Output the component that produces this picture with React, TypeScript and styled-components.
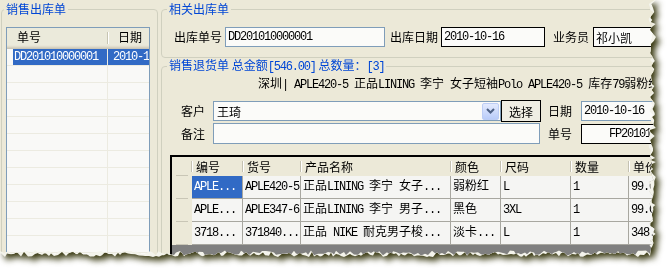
import styled, { createGlobalStyle } from 'styled-components';

const MONO = `"Liberation Mono", "Noto Sans CJK SC", monospace`;

const GlobalStyle = createGlobalStyle`
  html, body {
    margin: 0;
    padding: 0;
    background: #ffffff;
  }
  body {
    font-family: "Noto Sans CJK SC", "Noto Sans", sans-serif;
    font-size: 12px;
    color: #000;
  }
`;

// torn paper edge on the right and bottom
const makeTorn = (W: number, H: number, spread: number, seed: number) => {
    let s = seed;
    const rnd = () => {
        s = (s * 16807) % 2147483647;
        return s / 2147483647;
    };
    const pts: string[] = ['0px 0px'];
    for (let y = 0; y <= H - 6; y += 2 + Math.floor(rnd() * 3)) {
        pts.push(`${(W - spread - rnd() * 6).toFixed(1)}px ${y}px`);
    }
    for (let x = W - 6; x >= 0; x -= 2 + Math.floor(rnd() * 3)) {
        pts.push(`${x}px ${(H - spread - rnd() * 5).toFixed(1)}px`);
    }
    pts.push(`0px ${H - spread - 3}px`);
    return `polygon(${pts.join(', ')})`;
};

const edgeClip = makeTorn(656, 257, 0, 91);
const paperClip = makeTorn(656, 257, 1.5, 37);

// latin text in the old bitmap font is half width, han characters full width
const Han = styled.span`
    letter-spacing: 0;
`;
const mixed = (text: string) =>
    text.split(/([\u3000-\u9fff\uff00-\uffef]+)/).map((part, i) =>
        /[\u3000-\u9fff\uff00-\uffef]/.test(part) ? <Han key={i}>{part}</Han> : part
    );

const Screen = styled.div`
    width: 671px;
    height: 270px;
    overflow: hidden;
    filter: drop-shadow(4px 4px 3px rgba(46, 46, 4, 0.95));
`;

const Edge = styled.div<{ $clip: string }>`
    width: 660px;
    height: 262px;
    background: #f4f4ec;
    clip-path: ${(p) => p.$clip};
`;

const Paper = styled.div<{ $clip: string }>`
    width: 660px;
    height: 262px;
    box-sizing: border-box;
    padding-top: 2px;
    display: flex;
    align-items: flex-start;
    overflow: hidden;
    background: #ece9d8;
    clip-path: ${(p) => p.$clip};
`;

const GroupBox = styled.fieldset`
    margin: 0;
    padding: 0;
    min-width: 0;
    box-sizing: border-box;
    border: 1px solid #d0d0bf;
    border-radius: 4px;
`;

const GroupTitle = styled.legend<{ $indent: number }>`
    margin-left: ${(p) => p.$indent}px;
    padding: 0 2px;
    color: #0046d5;
    font-size: 12px;
    line-height: 14px;
    white-space: nowrap;
`;

const TitleNum = styled.span`
    font-family: ${MONO};
    letter-spacing: -1.2px;
`;

const LeftGroup = styled(GroupBox)`
    flex: none;
    width: 157px;
    height: 280px;
    margin-left: 1px;
    padding: 11px 0 0 4px;
`;

const ListView = styled.div`
    width: 144px;
    height: 240px;
    box-sizing: border-box;
    border: 1px solid #7f9db9;
    background: #f9f9f7;
`;

const ListHead = styled.div`
    display: flex;
    height: 21px;
    box-sizing: border-box;
    padding-bottom: 4px;
    background: #ebeadb;
    box-shadow: inset 0 -1px #cbc7b8, inset 0 -2px #d6d2c2, inset 0 -3px #e2decd, inset 0 -4px #e8e6d8;
`;

const HeadCell = styled.div<{ $w?: number }>`
    position: relative;
    width: ${(p) => (p.$w ? `${p.$w}px` : 'auto')};
    flex: ${(p) => (p.$w ? 'none' : '1')};
    padding-left: 10px;
    box-sizing: border-box;
    line-height: 17px;
    &::after {
        content: ${(p) => (p.$w ? '""' : 'none')};
        position: absolute;
        right: 0;
        top: 4px;
        width: 1px;
        height: 12px;
        background: #c7c5b2;
        box-shadow: 1px 0 #ffffff;
    }
`;

const ListRow = styled.div`
    display: flex;
    height: 17px;
    box-sizing: border-box;
    padding-left: 6px;
    border-bottom: 1px solid #ecebe1;
`;

const ListCell = styled.div<{ $w?: number; $selected?: boolean; $pad: number }>`
    width: ${(p) => (p.$w ? `${p.$w}px` : 'auto')};
    flex: ${(p) => (p.$w ? 'none' : '1')};
    padding-left: ${(p) => p.$pad}px;
    box-sizing: border-box;
    border-right: ${(p) => (p.$w ? '1px solid #ecebe1' : 'none')};
    background: ${(p) => (p.$selected ? '#316ac5' : 'transparent')};
    color: ${(p) => (p.$selected ? '#ffffff' : '#000')};
    font-family: ${MONO};
    letter-spacing: -1.2px;
    line-height: 16px;
    white-space: nowrap;
    overflow: hidden;
`;

const RightPane = styled.div`
    flex: none;
    display: flex;
    flex-direction: column;
    width: 520px;
    margin-left: 3px;
`;

const TopGroup = styled(GroupBox)`
    padding: 11px 0 10px 12px;
`;

const FieldRow = styled.div`
    display: flex;
    align-items: center;
`;

const Label = styled.span<{ $gap?: number }>`
    margin-left: ${(p) => p.$gap || 0}px;
    line-height: 14px;
    white-space: nowrap;
`;

const TextBox = styled.input<{ $w: number; $gap?: number; $dark?: boolean; $h?: number; $indent?: number }>`
    box-sizing: border-box;
    width: ${(p) => p.$w}px;
    height: ${(p) => p.$h || 20}px;
    margin: 0 0 0 ${(p) => p.$gap || 0}px;
    padding: 0 0 0 ${(p) => p.$indent || 2}px;
    border: 1px solid ${(p) => (p.$dark ? '#000000' : '#7f9db9')};
    border-radius: 0;
    background: #fbfbf9;
    color: #000;
    font-family: ${MONO};
    font-size: 12px;
    letter-spacing: -1.2px;
    outline: none;
    flex: none;
`;

const HanBox = styled(TextBox)`
    font-family: "Noto Sans CJK SC", sans-serif;
    letter-spacing: 0;
`;

const BottomGroup = styled(GroupBox)`
    padding: 1px 0 0 8px;
    height: 210px;
`;

const Desc = styled.div`
    margin: 2px 0 0 88px;
    line-height: 16px;
    white-space: nowrap;
    font-family: ${MONO};
    letter-spacing: -1.2px;
`;

const FormRow = styled.div<{ $top: number }>`
    display: flex;
    align-items: center;
    margin: ${(p) => p.$top}px 0 0 11px;
`;

const FormLabel = styled.span<{ $w: number; $gap?: number }>`
    width: ${(p) => p.$w}px;
    margin-left: ${(p) => p.$gap || 0}px;
    flex: none;
    line-height: 14px;
`;

const Combo = styled.div`
    box-sizing: border-box;
    width: 288px;
    height: 20px;
    display: flex;
    align-items: center;
    justify-content: space-between;
    padding: 0 1px 0 3px;
    border: 1px solid #7f9db9;
    background: #fbfbf9;
    flex: none;
`;

const ComboArrow = styled.span`
    box-sizing: border-box;
    width: 17px;
    height: 17px;
    display: flex;
    align-items: center;
    justify-content: center;
    border: 1px solid #bccdf5;
    border-radius: 2px;
    background: linear-gradient(#e3eafe, #b9ccf9);
`;

const PickButton = styled.button`
    box-sizing: border-box;
    width: 40px;
    height: 22px;
    padding: 0;
    border: 1px solid #000;
    border-radius: 0;
    background: #efede3;
    color: #000;
    font: inherit;
    flex: none;
`;

const COLS = '20px 51px 58px 150px 50px 70px 58px 80px';

const DataGrid = styled.div`
    margin-top: 11px;
    width: 520px;
    height: 110px;
    box-sizing: border-box;
    border-top: 2px solid #000;
    border-left: 2px solid #000;
    background: #808080;
`;

const GridRow = styled.div<{ $header?: boolean }>`
    display: grid;
    grid-template-columns: ${COLS};
    height: ${(p) => (p.$header ? 19 : 23)}px;
    background: #ece9d8;
`;

const GridHead = styled.div`
    position: relative;
    padding-left: 4px;
    line-height: 19px;
    white-space: nowrap;
    &::before {
        content: "";
        position: absolute;
        left: -1px;
        top: 4px;
        width: 1px;
        height: 11px;
        background: #c5c2b2;
        box-shadow: 1px 0 #ffffff;
    }
`;

const RowHeader = styled.div`
    position: relative;
    background: #ece9d8;
    &::after {
        content: "";
        position: absolute;
        left: 4px;
        right: 4px;
        bottom: 0;
        height: 1px;
        background: #c9c6b6;
    }
`;

const GridCell = styled.div<{ $selected?: boolean }>`
    box-sizing: border-box;
    padding-left: 2px;
    border-right: 1px solid #a8a7a0;
    border-bottom: 1px solid #a8a7a0;
    background: ${(p) => (p.$selected ? '#316ac5' : '#f5f5f3')};
    color: ${(p) => (p.$selected ? '#ffffff' : '#000')};
    font-family: ${MONO};
    letter-spacing: -1.2px;
    line-height: 22px;
    white-space: nowrap;
    overflow: hidden;
`;

const headers = ['', '编号', '货号', '产品名称', '颜色', '尺码', '数量', '单价'];
const rows = [
    ['APLE...', 'APLE420-5', '正品LINING 李宁 女子...', '弱粉红', 'L', '1', '99.00'],
    ['APLE...', 'APLE347-6', '正品LINING 李宁 男子...', '黑色', '3XL', '1', '99.00'],
    ['3718...', '371840...', '正品 NIKE 耐克男子梭...', '淡卡...', 'L', '1', '348.00'],
];

function App() {
    return (
        <>
            <GlobalStyle />
            <Screen>
                <Edge $clip={edgeClip}>
                    <Paper $clip={paperClip}>
                        <LeftGroup>
                            <GroupTitle $indent={-2}>销售出库单</GroupTitle>
                            <ListView>
                                <ListHead>
                                    <HeadCell $w={101}>单号</HeadCell>
                                    <HeadCell>日期</HeadCell>
                                </ListHead>
                                {Array.from({ length: 12 }).map((_, i) => (
                                    <ListRow key={i}>
                                        <ListCell $w={95} $pad={1} $selected={i === 0}>
                                            {i === 0 ? 'DD201010000001' : ''}
                                        </ListCell>
                                        <ListCell $pad={5} $selected={i === 0}>
                                            {i === 0 ? '2010-10-16' : ''}
                                        </ListCell>
                                    </ListRow>
                                ))}
                            </ListView>
                        </LeftGroup>

                        <RightPane>
                            <TopGroup>
                                <GroupTitle $indent={-7}>相关出库单</GroupTitle>
                                <FieldRow>
                                    <Label>出库单号</Label>
                                    <TextBox $w={160} $gap={3} readOnly value="DD201010000001" />
                                    <Label $gap={5}>出库日期</Label>
                                    <TextBox $w={104} $gap={3} $dark readOnly value="2010-10-16" />
                                    <Label $gap={8}>业务员</Label>
                                    <HanBox $w={90} $gap={4} $dark readOnly value="祁小凯" />
                                </FieldRow>
                            </TopGroup>

                            <BottomGroup>
                                <GroupTitle $indent={-3}>
                                    销售退货单 总金额<TitleNum>[546.00]</TitleNum> 总数量：<TitleNum>[3]</TitleNum>
                                </GroupTitle>
                                <Desc>{mixed('深圳| APLE420-5 正品LINING 李宁 女子短袖Polo APLE420-5 库存79弱粉红')}</Desc>
                                <FormRow $top={7}>
                                    <FormLabel $w={32}>客户</FormLabel>
                                    <Combo>
                                        <span>王琦</span>
                                        <ComboArrow>
                                            <svg width="9" height="6" viewBox="0 0 9 6">
                                                <polyline points="1,1 4.5,4.5 8,1" fill="none" stroke="#4d6185" strokeWidth="2" />
                                            </svg>
                                        </ComboArrow>
                                    </Combo>
                                    <PickButton>选择</PickButton>
                                    <FormLabel $w={33} $gap={7}>日期</FormLabel>
                                    <TextBox $w={90} readOnly value="2010-10-16" />
                                </FormRow>
                                <FormRow $top={1}>
                                    <FormLabel $w={32}>备注</FormLabel>
                                    <TextBox $w={327} $h={21} readOnly value="" />
                                    <FormLabel $w={33} $gap={8}>单号</FormLabel>
                                    <TextBox $w={90} $dark $indent={27} readOnly value="FP201010000001" />
                                </FormRow>

                                <DataGrid>
                                    <GridRow $header>
                                        {headers.map((h, i) =>
                                            i === 0 ? <RowHeader key={i} /> : <GridHead key={i}>{h}</GridHead>
                                        )}
                                    </GridRow>
                                    {rows.map((r, ri) => (
                                        <GridRow key={ri}>
                                            <RowHeader />
                                            {r.map((c, ci) => (
                                                <GridCell key={ci} $selected={ri === 0 && ci === 0}>
                                                    {mixed(c)}
                                                </GridCell>
                                            ))}
                                        </GridRow>
                                    ))}
                                </DataGrid>
                            </BottomGroup>
                        </RightPane>
                    </Paper>
                </Edge>
            </Screen>
        </>
    );
}

export default App;
